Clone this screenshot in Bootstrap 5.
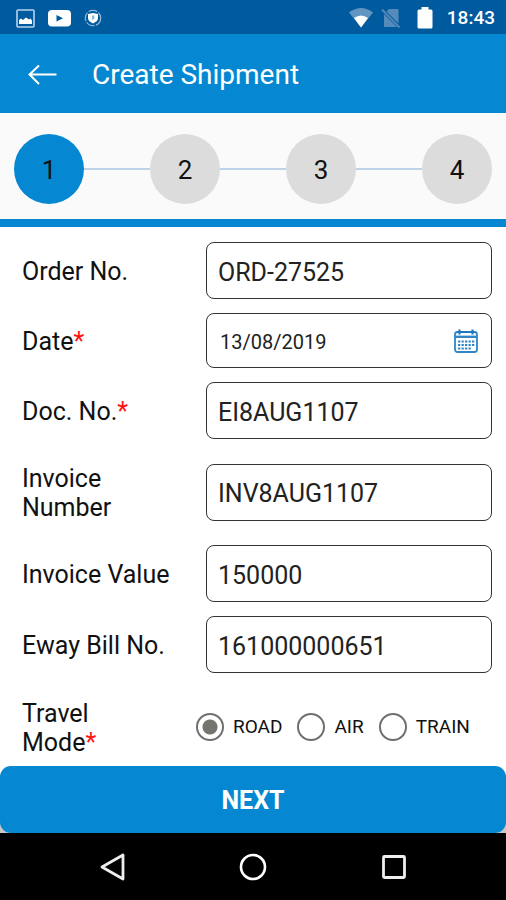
<!DOCTYPE html>
<html lang="en">
<head>
<meta charset="utf-8">
<meta name="viewport" content="width=device-width, initial-scale=1">
<title>Create Shipment</title>
<link href="https://cdn.jsdelivr.net/npm/bootstrap@5.3.0/dist/css/bootstrap.min.css" rel="stylesheet">
<style>
  body { font-family: Roboto, "Liberation Sans", sans-serif; font-size: 25px; line-height: 29px; color: #111; background: #fff; }
  svg { display: block; flex: none; }
  .status-bar { height: 34px; padding: 2px 11px 0 16px; background: #005a9e; color: #fff; }
  .status-left { gap: 13px; }
  .status-time { font-size: 19px; font-weight: 500; line-height: 24px; margin-left: 14px; }
  .app-bar { height: 79px; padding: 2px 28px 0; background: #0588d1; color: #fff; gap: 35px; }
  .app-title { font-size: 28px; line-height: 32px; font-weight: 400; }
  .plain-btn { background: none; border: 0; padding: 0; }
  .steps { padding: 21px 14px 15px; background: #fafafa; border-bottom: 8px solid #0588d1; }
  .step-dot { width: 70px; height: 70px; padding-top: 2px; background: #dcdcdc; color: #111; font-size: 26px; }
  .step-dot.current { background: #0588d1; }
  .step-line { height: 2px; background: #bfd3e8; }
  .form-area { padding: 15px 14px 0 22px; gap: 14px; }
  .field { display: grid; grid-template-columns: 154px 1fr; column-gap: 30px; align-items: center; }
  .field-name { padding-top: 2px; }
  .field-tall { padding: 9px 0; }
  .req { color: #f11; }
  .field .form-control { height: 57px; border: 1px solid #333; border-radius: 8px; padding: 3px 11px 0; font-size: 25px; line-height: 30px; color: #222; background: #fff; }
  .date-box .form-control { height: 55px; padding-left: 13px; padding-right: 50px; font-size: 20px; }
  .date-btn { right: 14px; }
  .modes { gap: 15px; margin-left: -10px; font-size: 19px; line-height: 24px; }
  .modes label { gap: 9px; }
  .modes .form-check-input { width: 28px; height: 28px; margin: 0; border: 2px solid #6f6f6f; background: #fff; flex: none; }
  .modes .form-check-input:checked { background: radial-gradient(circle, #757570 0 7px, #fff 8px); }
  .next-wrap { background: linear-gradient(#fff 50%, #c8c8c8 50%); }
  .next-btn, .next-btn:hover { height: 67px; padding: 2px 0 0; border: 0; border-radius: 11px; background: #0588d1; color: #fff; font-size: 25px; font-weight: 700; }
  .system-nav { height: 67px; padding: 0 98px; background: #000; }
</style>
<script src="https://cdn.jsdelivr.net/npm/bootstrap@5.3.0/dist/js/bootstrap.bundle.min.js"></script>
</head>
<body class="d-flex flex-column min-vh-100">

<div class="status-bar d-flex align-items-center">
  <div class="status-left d-flex align-items-center">
    <svg width="19" height="19" viewBox="0 0 19 19"><rect x="1" y="1" width="17" height="17" rx="1" fill="none" stroke="#b9d4ea" stroke-width="1.6"/><path d="M3 15V11l2-1.500 2 1.500 3-2.500 3 2 1.500-1 1.500 2v3.500z" fill="#fff"/></svg>
    <svg width="23" height="17" viewBox="0 0 23 17"><rect width="23" height="16.500" rx="4" fill="#fff"/><path d="M8.500 5l6.500 3.200-6.500 3.200z" fill="#005a9e"/></svg>
    <svg width="18" height="18" viewBox="0 0 18 18"><circle cx="9" cy="9" r="7.700" fill="none" stroke="#8db8da" stroke-width="1.200" stroke-dasharray="9 1.500"/><path d="M9 4l5 1v4c0 2.500-2 4-5 5.500-3-1.500-5-3-5-5.500V5z" fill="#fff"/><path d="M8 6.500h2.300v3.300L8 11z" fill="#8db8da"/></svg>
  </div>
  <svg class="ms-auto" width="24" height="20" viewBox="0 0 24 20"><path d="M0 4.500Q12-4.500 24 4.500L12 19.500z" fill="#6195c2"/><path d="M5 10Q12 5 19 10L12 19.500z" fill="#fff"/></svg>
  <svg class="ms-2" width="20" height="20" viewBox="0 0 20 20"><path d="M8 1h8.500q1 0 1 1v13.500L5.500 3.500zM3 6l13 13H4q-1 0-1-1z" fill="#548bbb"/><path d="M1 1.500l17.500 18" stroke="#548bbb" stroke-width="1.800"/></svg>
  <svg class="ms-3" width="16" height="22" viewBox="0 0 16 22"><path d="M4.500 0h7v2.500H14q1.500 0 1.500 1.500v16q0 1.500-1.500 1.500H2Q.5 21.500.5 20V4q0-1.500 1.500-1.500h2.500z" fill="#fff"/></svg>
  <span class="status-time">18:43</span>
</div>

<header class="app-bar d-flex align-items-center">
  <button class="plain-btn" type="button" aria-label="Back"><svg width="29" height="22" viewBox="0 0 29 22"><path d="M11 1.500L1.500 10.500l9.500 9.500M1.500 10.500H28.500" fill="none" stroke="#fff" stroke-width="2"/></svg></button>
  <h1 class="app-title m-0">Create Shipment</h1>
</header>

<div class="steps d-flex align-items-center">
  <div class="step-dot current rounded-circle d-flex align-items-center justify-content-center">1</div>
  <div class="step-line flex-fill"></div>
  <div class="step-dot rounded-circle d-flex align-items-center justify-content-center">2</div>
  <div class="step-line flex-fill"></div>
  <div class="step-dot rounded-circle d-flex align-items-center justify-content-center">3</div>
  <div class="step-line flex-fill"></div>
  <div class="step-dot rounded-circle d-flex align-items-center justify-content-center">4</div>
</div>

<form class="d-flex flex-column flex-fill">
  <div class="form-area d-flex flex-column flex-fill">
    <div class="field"><label class="field-name" for="order">Order No.</label><input class="form-control" id="order" type="text" value="ORD-27525"></div>
    <div class="field"><label class="field-name" for="date">Date<span class="req">*</span></label>
      <div class="date-box position-relative d-flex align-items-center">
        <input class="form-control" id="date" type="text" value="13/08/2019">
        <button class="plain-btn date-btn position-absolute" type="button" aria-label="Pick a date">
          <svg width="24" height="24" viewBox="0 0 24 24"><rect x="1" y="3" width="22" height="20" rx="2.500" fill="#fff" stroke="#2f86c9" stroke-width="1.800"/><path d="M1 7.800h22" stroke="#2f86c9" stroke-width="2.400"/><path d="M3 3h18M5.500.5v5M18.500.5v5" stroke="#1f78bf" stroke-width="2.200"/><path d="M4 12.500h16.500M4 16h16.500M4 19.500h13" stroke="#2f86c9" stroke-width="2" stroke-dasharray="2.300 1.200"/></svg>
        </button>
      </div>
    </div>
    <div class="field"><label class="field-name" for="doc">Doc. No.<span class="req">*</span></label><input class="form-control" id="doc" type="text" value="EI8AUG1107"></div>
    <div class="field field-tall"><label class="field-name" for="invno">Invoice Number</label><input class="form-control" id="invno" type="text" value="INV8AUG1107"></div>
    <div class="field"><label class="field-name" for="invval">Invoice Value</label><input class="form-control" id="invval" type="text" value="150000"></div>
    <div class="field"><label class="field-name" for="eway">Eway Bill No.</label><input class="form-control" id="eway" type="text" value="161000000651"></div>
    <div class="field flex-fill" role="radiogroup" aria-labelledby="mode">
      <div class="field-name" id="mode">Travel<br>Mode<span class="req">*</span></div>
      <div class="modes d-flex">
        <label class="d-flex align-items-center"><input class="form-check-input" type="radio" name="mode" checked>ROAD</label>
        <label class="d-flex align-items-center"><input class="form-check-input" type="radio" name="mode">AIR</label>
        <label class="d-flex align-items-center"><input class="form-check-input" type="radio" name="mode">TRAIN</label>
      </div>
    </div>
  </div>
  <div class="next-wrap"><button class="btn next-btn w-100 d-block" type="button">NEXT</button></div>
</form>

<nav class="system-nav d-flex align-items-center justify-content-between" aria-label="System">
  <button class="plain-btn" type="button" aria-label="Back"><svg width="28" height="28" viewBox="0 0 28 28"><path d="M25 2v24L4 14z" fill="none" stroke="#eee" stroke-width="2.800" stroke-linejoin="round"/></svg></button>
  <button class="plain-btn" type="button" aria-label="Home"><svg width="28" height="28" viewBox="0 0 28 28"><circle cx="14" cy="14" r="12" fill="none" stroke="#fff" stroke-width="2.600"/></svg></button>
  <button class="plain-btn" type="button" aria-label="Recent apps"><svg width="28" height="28" viewBox="0 0 28 28"><rect x="3.500" y="3.500" width="21" height="21" rx="1" fill="none" stroke="#eee" stroke-width="2.800"/></svg></button>
</nav>
</body>
</html>
